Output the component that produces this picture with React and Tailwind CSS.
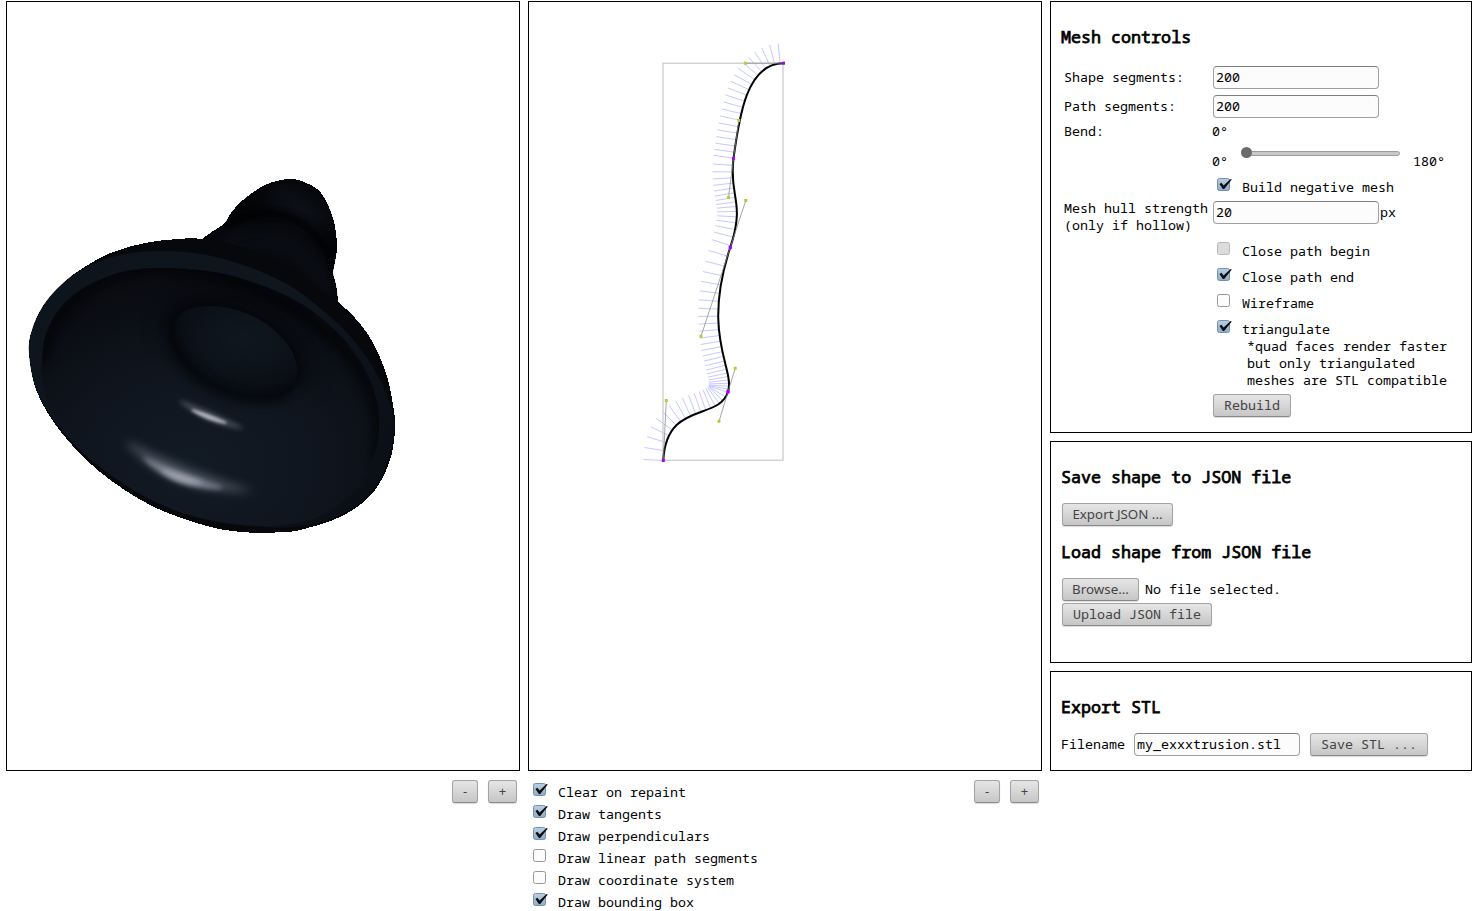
import React from "react";

const MONO = "font-['Noto_Sans_Mono','Droid_Sans_Mono','DejaVu_Sans_Mono',monospace]";

/* ---------- geometry helpers ---------- */
function smooth(pts) {
  const n = pts.length;
  const at = (i) => pts[(i + n) % n];
  let d = `M${pts[0][0]} ${pts[0][1]}`;
  for (let i = 0; i < n; i++) {
    const [a, b, c, e] = [at(i - 1), at(i), at(i + 1), at(i + 2)];
    d += `C${b[0] + (c[0] - a[0]) / 6} ${b[1] + (c[1] - a[1]) / 6} ${c[0] - (e[0] - b[0]) / 6} ${c[1] - (e[1] - b[1]) / 6} ${c[0]} ${c[1]}`;
  }
  return d + "Z";
}

const CURVES = [
  [[663.3, 460.5], [666.3, 400.5], [719, 421.3], [728, 391.8]],
  [[728, 391.8], [735.2, 368.3], [701, 336.3], [730.3, 247.3]],
  [[730.3, 247.3], [745.8, 200.5], [728.5, 197.5], [733.5, 158.5]],
  [[733.5, 158.5], [738.8, 120.5], [745.5, 63.2], [783.5, 63.2]],
];

const pointAt = ([a, b, c, d], t) =>
  [0, 1].map((k) => (1 - t) ** 3 * a[k] + 3 * (1 - t) ** 2 * t * b[k] + 3 * (1 - t) * t * t * c[k] + t ** 3 * d[k]);
const tangentAt = ([a, b, c, d], t) =>
  [0, 1].map((k) => (1 - t) ** 2 * (b[k] - a[k]) + 2 * (1 - t) * t * (c[k] - b[k]) + t * t * (d[k] - c[k]));

function lengthOf(curve) {
  let sum = 0;
  let prev = curve[0];
  for (let i = 1; i <= 100; i++) {
    const p = pointAt(curve, i / 100);
    sum += Math.hypot(p[0] - prev[0], p[1] - prev[1]);
    prev = p;
  }
  return sum;
}

function perpendiculars() {
  const lens = CURVES.map(lengthOf);
  const total = lens.reduce((a, b) => a + b, 0);
  const step = total / 76.6;
  const out = [];
  for (let u = 0; u < total; u += step) {
    let rest = u;
    let i = 0;
    while (i < 3 && rest > lens[i]) rest -= lens[i++];
    const t = rest / lens[i];
    const p = pointAt(CURVES[i], t);
    const v = tangentAt(CURVES[i], t);
    const l = Math.hypot(v[0], v[1]) || 1;
    out.push([p[0], p[1], p[0] + (v[1] / l) * 20, p[1] - (v[0] / l) * 20]);
  }
  return out;
}

/* ---------- form controls ---------- */
function Check({ state = "on" }) {
  const fill = state === "on" ? "url(#ckOn)" : state === "disabled" ? "#dcdcdc" : "#fcfcfc";
  const stroke = state === "on" ? "#7391ad" : state === "disabled" ? "#b9b9b9" : "#979797";
  return (
    <svg width="16" height="15" viewBox="0 0 16 15" className="block shrink-0">
      <defs>
        <linearGradient id="ckOn" x1="0" y1="0" x2="0" y2="1">
          <stop offset="0" stopColor="#b9cfe3" />
          <stop offset="1" stopColor="#8fadc8" />
        </linearGradient>
      </defs>
      <rect x="0.5" y="1.5" width="12" height="12" rx="2" fill={fill} stroke={stroke} />
      {state === "on" && <path d="M2.4 7L4.4 5.8L6.6 8.6L13.6 1.9L14.8 2.6L7.2 11.9H5.9Z" fill="#0c0c0c" />}
    </svg>
  );
}

function Button({ children, className = "" }) {
  return (
    <button
      className={
        "h-[23px] shrink-0 rounded-[3px] border border-[#a3a3a3] border-b-[#8a8a8a] bg-linear-to-b from-[#e6e6e6] to-[#c6c6c6] pb-px text-center leading-[20px] text-[#444] shadow-[0_1px_1px_rgba(0,0,0,0.15)] " +
        className
      }
    >
      {children}
    </button>
  );
}

function Field({ value }) {
  return (
    <input
      readOnly
      value={value}
      className="h-[23px] w-[166px] shrink-0 rounded-[4px] border border-[#a0a0a0] border-t-[#7e7e7e] bg-[#fcfcfc] px-[2px] pb-[2px] text-black outline-none"
    />
  );
}

function CheckRow({ label, state, className = "" }) {
  return (
    <div className={"flex " + className}>
      <div className="w-[25px] pt-px">
        <Check state={state} />
      </div>
      <div className="pt-[3px]">{label}</div>
    </div>
  );
}

function Title({ children }) {
  return <h3 className="h-[22px] text-[16.7px] leading-[21px] font-normal [-webkit-text-stroke:0.75px_black]">{children}</h3>;
}

function ZoomButtons() {
  return (
    <div className="flex gap-[10px] font-['Noto_Sans',sans-serif] text-[13px]">
      <Button className="w-[26px]">-</Button>
      <Button className="w-[29px]">+</Button>
    </div>
  );
}

/* ---------- viewports ---------- */
const NECK = [[188, 249], [202, 239], [213, 231], [224, 224], [231, 213], [243, 200], [265, 185], [288, 179], [304, 182], [321, 193], [333, 218], [337, 245], [335, 262], [333, 273], [336, 285], [338, 303], [335, 325], [270, 320], [215, 275]];
const BODY = [[29, 353], [32, 330], [43, 306], [62, 284], [86, 266], [113, 252], [145, 243], [178, 239], [203, 239], [240, 246], [290, 269], [338, 302], [367, 333], [385, 370], [393, 405], [395, 430], [389, 463], [371, 495], [340, 517], [300, 530], [281, 532], [262, 533], [232, 531], [200, 524], [150, 505], [100, 472], [61, 432], [37, 392]];
const FACE = [[29, 353], [32, 330], [43, 306], [62, 284], [86, 267], [120, 255], [165, 251], [220, 258], [283, 282], [333, 319], [365, 355], [386, 393], [394, 425], [388, 460], [370, 494], [340, 515], [300, 526], [262, 527], [200, 518], [150, 499], [100, 467], [61, 429], [37, 391]];
const DISH = [[42, 360], [46, 334], [60, 308], [85, 287], [122, 272], [160, 268], [200, 270], [240, 278], [293, 299], [333, 328], [360, 361], [375, 394], [379, 427], [372, 462], [353, 493], [318, 517], [267, 526], [200, 518], [140, 494], [82, 452], [55, 417], [43, 387]];
const HOLE = [[171, 333], [176, 318], [190, 309], [213, 306], [240, 311], [268, 325], [288, 345], [297, 366], [295, 382], [284, 393], [262, 397], [230, 391], [200, 376], [179, 355]];

function Blur({ id, r }) {
  return (
    <filter id={id} x="-60%" y="-60%" width="220%" height="220%" colorInterpolationFilters="sRGB">
      <feGaussianBlur stdDeviation={r} />
    </filter>
  );
}

function MeshView() {
  return (
    <svg viewBox="7 2 512 768" className="block h-full w-full">
      <defs>
        <Blur id="b1" r="1.6" />
        <Blur id="b2" r="2.8" />
        <Blur id="b4" r="5" />
        <Blur id="b9" r="10" />
        <clipPath id="cNeck"><path d={smooth(NECK)} /></clipPath>
        <clipPath id="cDish"><path d={smooth(DISH)} /></clipPath>
        <clipPath id="cHole"><path d={smooth(HOLE)} /></clipPath>
        <linearGradient id="gFace" x1="0" y1="0" x2="1" y2="1">
          <stop offset="0" stopColor="#0c131b" />
          <stop offset="0.4" stopColor="#0f161e" />
          <stop offset="0.75" stopColor="#0c1119" />
          <stop offset="1" stopColor="#0a0d13" />
        </linearGradient>
        <radialGradient id="gDish" cx="0.46" cy="0.76" r="0.68">
          <stop offset="0" stopColor="#121a24" />
          <stop offset="0.5" stopColor="#10161f" />
          <stop offset="1" stopColor="#0a0c12" />
        </radialGradient>
        <radialGradient id="gHole" cx="0.58" cy="0.36" r="0.66">
          <stop offset="0" stopColor="#0f171f" />
          <stop offset="0.55" stopColor="#0c121a" />
          <stop offset="1" stopColor="#090c12" />
        </radialGradient>
      </defs>

      <path d={smooth(NECK)} fill="#040507" shapeRendering="crispEdges" />
      <g clipPath="url(#cNeck)">
        <ellipse cx="300" cy="208" rx="36" ry="15" transform="rotate(32 300 208)" fill="#0d1018" filter="url(#b9)" />
        <path d="M218 246Q268 232 298 252T326 300" fill="none" stroke="#0b0e15" strokeWidth="26" filter="url(#b9)" />
        <path d="M224 226C262 206 292 212 312 232S331 262 333 275" fill="none" stroke="#010102" strokeWidth="5" filter="url(#b2)" />
      </g>

      <path d={smooth(BODY)} fill="#06080b" shapeRendering="crispEdges" />
      <path d={smooth(FACE)} fill="url(#gFace)" />
      <path d={smooth(DISH)} fill="url(#gDish)" />
      <g clipPath="url(#cDish)">
        <path d="M42 362C44 318 90 268 162 268C270 270 378 350 380 430Q380 446 375 460" fill="none" stroke="#020304" strokeWidth="12" opacity="0.65" filter="url(#b4)" />
        <path d="M168 338C164 300 210 290 250 304S306 350 304 388" fill="none" stroke="#040508" strokeWidth="16" opacity="0.5" filter="url(#b9)" />
        <path d={smooth(HOLE)} fill="#030406" stroke="#030406" strokeWidth="4" filter="url(#b4)" />
      </g>
      <path d={smooth(HOLE)} fill="url(#gHole)" />
      <g clipPath="url(#cHole)">
        <path d="M176 304C158 334 180 370 208 388S286 416 302 382" fill="none" stroke="#040608" strokeWidth="11" filter="url(#b4)" />
      </g>
      <path d="M172 350C186 380 234 408 284 398" fill="none" stroke="#06080c" strokeWidth="8" opacity="0.8" filter="url(#b4)" />

      <path d="M180 401Q206 424 242 428Q212 412 180 401Z" fill="#656c79" stroke="#656c79" strokeWidth="2" opacity="0.6" filter="url(#b2)" />
      <path d="M192 410Q207 420 226 423Q210 415 192 410Z" fill="#b0b4c0" stroke="#b0b4c0" strokeWidth="2" filter="url(#b1)" />
      <path d="M124 440Q168 496 254 491Q188 470 124 440Z" fill="#636b78" opacity="0.65" filter="url(#b4)" />
      <path d="M144 458Q174 489 222 488Q180 473 144 458Z" fill="#858b98" stroke="#858b98" strokeWidth="2" opacity="0.8" filter="url(#b2)" />
      <path d="M162 470Q178 483 201 483Q182 476 162 470Z" fill="#a9adb9" stroke="#a9adb9" strokeWidth="2" opacity="0.85" filter="url(#b2)" />
    </svg>
  );
}

function CurveView() {
  const path = CURVES.map(([a, b, c, d], i) => `${i ? "" : `M${a}`}C${b} ${c} ${d}`).join("");
  return (
    <svg viewBox="529 2 512 768" className="block h-full w-full">
      <rect x="663" y="63.2" width="120" height="397" fill="none" stroke="#c4c4c4" strokeWidth="1.1" />
      {perpendiculars().map(([x1, y1, x2, y2], i) => (
        <line key={i} x1={x1} y1={y1} x2={x2} y2={y2} stroke="#c8c8ff" strokeWidth="1" />
      ))}
      <path d={path} fill="none" stroke="#000" strokeWidth="2" />
      {CURVES.map(([a, b, c, d], i) => (
        <g key={i}>
          <path d={`M${a}L${b}M${c}L${d}`} stroke="#888" strokeOpacity="0.75" strokeWidth="1" />
          <rect x={b[0] - 1.5} y={b[1] - 1.5} width="3" height="3" fill="#b4cc32" />
          <rect x={c[0] - 1.5} y={c[1] - 1.5} width="3" height="3" fill="#b4cc32" />
        </g>
      ))}
      {CURVES.flatMap((c) => [c[0], c[3]]).map(([x, y], i) => (
        <rect key={i} x={x - 1.5} y={y - 1.5} width="3" height="3" fill="#a800ff" />
      ))}
    </svg>
  );
}

const OPTIONS = [
  ["Clear on repaint", "on"],
  ["Draw tangents", "on"],
  ["Draw perpendiculars", "on"],
  ["Draw linear path segments", "off"],
  ["Draw coordinate system", "off"],
  ["Draw bounding box", "on"],
];

export default function App() {
  return (
    <div className={"flex h-[911px] w-[1479px] gap-2 overflow-hidden bg-white pt-px pl-[6px] text-[13.333px] leading-[17px] whitespace-nowrap text-black " + MONO}>
      <section className="w-[514px] shrink-0">
        <div className="h-[770px] border border-black">
          <MeshView />
        </div>
        <div className="flex justify-end pt-[9px] pr-[3px]">
          <ZoomButtons />
        </div>
      </section>

      <section className="w-[514px] shrink-0">
        <div className="h-[770px] border border-black">
          <CurveView />
        </div>
        <div className="flex justify-between pt-[9px] pr-[3px] pl-[5px]">
          <div className="pt-px">
            {OPTIONS.map(([label, state]) => (
              <CheckRow key={label} label={label} state={state} className="h-[22px]" />
            ))}
          </div>
          <ZoomButtons />
        </div>
      </section>

      <aside className="flex w-[422px] shrink-0 flex-col gap-2">
        <div className="h-[432px] border border-black pt-6 pl-[10px]">
          <Title>Mesh controls</Title>
          <div className="grid grid-cols-[149px_1fr] pt-[15px] pl-[3px]">
            <div className="flex h-[29px] items-center">Shape segments:</div>
            <div className="flex h-[29px] items-center"><Field value="200" /></div>
            <div className="flex h-[29px] items-center">Path segments:</div>
            <div className="flex h-[29px] items-center"><Field value="200" /></div>
            <div className="h-5 pt-[2px]">Bend:</div>
            <div className="-ml-px h-5 pt-[2px]">0°</div>
            <div />
            <div className="-ml-px flex h-8 items-start">
              <span className="w-[29px] pt-3">0°</span>
              <span className="flex w-[172px] items-center pt-[6px]">
                <span className="z-10 size-[11px] shrink-0 rounded-full bg-[#6b6b6b]" />
                <span className="mt-px -ml-[4px] h-[5px] w-[152px] rounded-full border border-[#9c9c9c] bg-[#c8c8c8]" />
              </span>
              <span className="pt-3">180°</span>
            </div>
            <div />
            <CheckRow label="Build negative mesh" state="on" className="h-[27px] pt-[3px] pl-1" />
            <div className="h-[38px]">Mesh hull strength<br />(only if hollow)</div>
            <div className="flex h-[38px] items-start pt-px">
              <Field value="20" />
              <span className="pt-[3px] pl-px">px</span>
            </div>
            <div />
            <div>
              <CheckRow label="Close path begin" state="disabled" className="h-[26px] pt-[2px] pl-1" />
              <CheckRow label="Close path end" state="on" className="h-[26px] pt-[2px] pl-1" />
              <CheckRow label="Wireframe" state="off" className="h-[26px] pt-[2px] pl-1" />
              <CheckRow label="triangulate" state="on" className="h-[22px] pt-[2px] pl-1" />
              <div className="pl-[34px]">*quad faces render faster<br />but only triangulated<br />meshes are STL compatible</div>
              <Button className="mt-[5px] w-[78px]">Rebuild</Button>
            </div>
          </div>
        </div>

        <div className="h-[222px] border border-black pt-6 pl-[10px]">
          <Title>Save shape to JSON file</Title>
          <Button className="mt-[15px] ml-px block w-[111px] font-['Noto_Sans',sans-serif]">Export JSON ...</Button>
          <div className="h-[15px]" />
          <Title>Load shape from JSON file</Title>
          <div className="flex items-center gap-[6px] pt-[15px] pl-px">
            <Button className="w-[77px] font-['Noto_Sans',sans-serif]">Browse...</Button>
            <span>No file selected.</span>
          </div>
          <Button className="mt-[2px] ml-px block w-[150px]">Upload JSON file</Button>
        </div>

        <div className="h-[100px] border border-black pt-6 pl-[10px]">
          <Title>Export STL</Title>
          <div className="flex items-center pt-[15px]">
            <span className="w-[73px]">Filename</span>
            <Field value="my_exxxtrusion.stl" />
            <Button className="ml-[10px] w-[118px]">Save STL ...</Button>
          </div>
        </div>
      </aside>
    </div>
  );
}
